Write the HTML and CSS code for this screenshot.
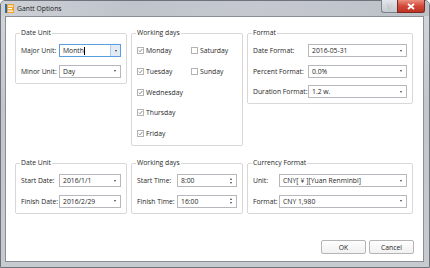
FILE: index.html
```html
<!DOCTYPE html>
<html lang="en">
<head>
    <meta charset="UTF-8">
    <title>Gantt Options</title>
    <link rel="stylesheet" href="styles.css">
</head>
<body>
    <div class="window">
        <!-- Title bar -->
        <div class="titlebar">
            <svg class="app-icon" width="9" height="9" viewBox="0 0 9 9">
                <rect x="0" y="0" width="9" height="9" fill="#f2a42b"/>
                <rect x="0" y="0" width="2" height="9" fill="#2e6db4"/>
                <rect x="3" y="1.5" width="5" height="1.2" fill="#fff"/>
                <rect x="3" y="4" width="4" height="1.2" fill="#fff"/>
                <rect x="3" y="6.5" width="5" height="1.2" fill="#fff"/>
            </svg>
            <span class="title">Gantt Options</span>
            <div class="caption">
                <span class="cap-btn help">?</span>
                <span class="cap-btn close">
                    <svg width="8" height="7" viewBox="0 0 8 7">
                        <path d="M1 1 L7 6 M7 1 L1 6" stroke="#fff" stroke-width="1.8"/>
                    </svg>
                </span>
            </div>
        </div>

        <div class="client">
            <div class="groups">
                <fieldset class="group">
                    <legend>Date Unit</legend>
                    <div class="form unit">
                        <label>Major Unit:</label>
                        <div class="combo focus"><span class="value">Month<i class="caret"></i></span><span class="drop"><b class="arrow"></b></span></div>
                        <label>Minor Unit:</label>
                        <div class="combo"><span class="value">Day</span><b class="arrow"></b></div>
                    </div>
                </fieldset>

                <fieldset class="group">
                    <legend>Working days</legend>
                    <div class="days">
                        <span class="check"><span class="box on"><svg width="5" height="5" viewBox="0 0 5 5"><path d="M0.8 2.6 L2 3.8 L4.3 1"/></svg></span>Monday</span>
                        <span class="check"><span class="box"></span>Saturday</span>
                        <span class="check"><span class="box on"><svg width="5" height="5" viewBox="0 0 5 5"><path d="M0.8 2.6 L2 3.8 L4.3 1"/></svg></span>Tuesday</span>
                        <span class="check"><span class="box"></span>Sunday</span>
                        <span class="check first"><span class="box on"><svg width="5" height="5" viewBox="0 0 5 5"><path d="M0.8 2.6 L2 3.8 L4.3 1"/></svg></span>Wednesday</span>
                        <span class="check first"><span class="box on"><svg width="5" height="5" viewBox="0 0 5 5"><path d="M0.8 2.6 L2 3.8 L4.3 1"/></svg></span>Thursday</span>
                        <span class="check first"><span class="box on"><svg width="5" height="5" viewBox="0 0 5 5"><path d="M0.8 2.6 L2 3.8 L4.3 1"/></svg></span>Friday</span>
                    </div>
                </fieldset>

                <fieldset class="group wide">
                    <legend>Format</legend>
                    <div class="form format">
                        <label>Date Format:</label>
                        <div class="combo"><span class="value">2016-05-31</span><b class="arrow"></b></div>
                        <label>Percent Format:</label>
                        <div class="combo"><span class="value">0.0%</span><b class="arrow"></b></div>
                        <label>Duration Format:</label>
                        <div class="combo"><span class="value">1.2 w.</span><b class="arrow"></b></div>
                    </div>
                </fieldset>

                <fieldset class="group">
                    <legend>Date Unit</legend>
                    <div class="form unit">
                        <label>Start Date:</label>
                        <div class="combo"><span class="value">2016/1/1</span><b class="arrow"></b></div>
                        <label>Finish Date:</label>
                        <div class="combo"><span class="value">2016/2/29</span><b class="arrow"></b></div>
                    </div>
                </fieldset>

                <fieldset class="group">
                    <legend>Working days</legend>
                    <div class="form time">
                        <label>Start Time:</label>
                        <div class="combo"><span class="value">8:00</span><span class="spin"><b class="up"></b><b class="down"></b></span></div>
                        <label>Finish Time:</label>
                        <div class="combo"><span class="value">16:00</span><span class="spin"><b class="up"></b><b class="down"></b></span></div>
                    </div>
                </fieldset>

                <fieldset class="group wide">
                    <legend>Currency Format</legend>
                    <div class="form currency">
                        <label>Unit:</label>
                        <div class="combo"><span class="value">CNY[<span class="yen">¥</span>][Yuan Renminbi]</span><b class="arrow"></b></div>
                        <label>Format:</label>
                        <div class="combo"><span class="value">CNY 1,980</span><b class="arrow"></b></div>
                    </div>
                </fieldset>
            </div>

            <div class="footer">
                <button class="btn">OK</button>
                <button class="btn">Cancel</button>
            </div>
        </div>
    </div>
</body>
</html>
```

FILE: styles.css
```css
/* Page */
body {
    margin: 0;
    font-family: "Open Sans", "DejaVu Sans", sans-serif;
    font-size: 6.8px;
    color: #1f1f1f;
}

/* Window frame */
.window {
    box-sizing: border-box;
    width: 430px;
    height: 268px;
    padding: 0 5px 5px 4px;
    display: flex;
    flex-direction: column;
    background: linear-gradient(to bottom, #d3d7dc, #c1c6cc 40%, #c7cbd0);
    border: 1px solid #6e737b;
    border-radius: 5px 5px 0 0;
}

.titlebar {
    height: 15px;
    margin: 0 -5px 0 -4px;
    padding: 0 4px 0 4px;
    display: flex;
    align-items: flex-start;
    background: linear-gradient(to right, #cdd1d6, #bfc4cb 30%, #c5c9cf 60%, #bcc1c8);
    border-radius: 4px 4px 0 0;
}

.app-icon {
    margin-top: 3px;
}

.title {
    margin-left: 3px;
    line-height: 15px;
    color: #1a1a1a;
}

.caption {
    margin-left: auto;
    display: flex;
    margin-top: -1px;
}

.cap-btn {
    box-sizing: border-box;
    height: 13px;
    display: flex;
    align-items: center;
    justify-content: center;
    border: 1px solid #7d8189;
    border-top: none;
}

.help {
    width: 16px;
    border-right: none;
    border-radius: 0 0 0 3px;
    background: linear-gradient(to bottom, #e3e6ea, #c5cad0);
    color: #f4f4f4;
    font-size: 8px;
    font-weight: bold;
    text-shadow: 0 0 1px #555;
}

.close {
    width: 28px;
    border-radius: 0 0 3px 0;
    background: linear-gradient(to bottom, #eb8f80, #d4483a 50%, #bd3322);
    border-color: #7a2a20;
}

/* Client area */
.client {
    flex: 1;
    display: flex;
    flex-direction: column;
    padding: 11px 9px 7px 9px;
    background: #fff;
    border: 1px solid #8a8f96;
}

.groups {
    display: grid;
    grid-template-columns: 112px 112px 166px;
    column-gap: 4px;
    row-gap: 12px;
    align-items: start;
}

.group {
    margin: 0;
    padding: 6px 5px 5px 5px;
    min-width: 0;
    border: 1px solid #d8d8d8;
    border-radius: 2px;
}

.group legend {
    height: 10px;
    line-height: 10px;
    padding: 0 1px;
    margin-left: -1px;
}

.form {
    display: grid;
    row-gap: 7.5px;
    align-items: center;
}

.unit { grid-template-columns: 38px 1fr; }
.format { grid-template-columns: 55px 1fr; }
.time { grid-template-columns: 40px 1fr; }
.currency { grid-template-columns: 26px 1fr; }

.form label {
    white-space: nowrap;
}

/* Combo boxes */
.combo {
    box-sizing: border-box;
    height: 13px;
    display: flex;
    align-items: center;
    padding-left: 3px;
    border: 1px solid #b6b8bd;
    background: #fff;
    white-space: nowrap;
}

.combo .value {
    display: flex;
    align-items: center;
}

.yen {
    padding: 0 2px;
}

.arrow {
    width: 0;
    height: 0;
    margin: 0 4px 0 auto;
    border-left: 1.5px solid transparent;
    border-right: 1.5px solid transparent;
    border-top: 2px solid #444;
}

.combo.focus {
    border-color: #5a9ee0;
}

.drop {
    margin-left: auto;
    width: 9px;
    height: 100%;
    display: flex;
    align-items: center;
    justify-content: center;
    background: #e2eaf4;
    border-left: 1px solid #b5cbe6;
}

.drop .arrow {
    margin: 0;
}

.caret {
    width: 1px;
    height: 8px;
    background: #000;
}

.spin {
    margin: 0 4px 0 auto;
    display: flex;
    flex-direction: column;
    gap: 2px;
}

.spin b {
    width: 0;
    height: 0;
    border-left: 1.5px solid transparent;
    border-right: 1.5px solid transparent;
}

.spin .up { border-bottom: 2px solid #444; }
.spin .down { border-top: 2px solid #444; }

/* Check boxes */
.days {
    display: grid;
    grid-template-columns: 54px 1fr;
    grid-auto-rows: 13px;
    row-gap: 7.75px;
    align-items: center;
}

.check {
    display: flex;
    align-items: center;
    gap: 2px;
    white-space: nowrap;
}

.check.first {
    grid-column: 1;
}

.box {
    box-sizing: border-box;
    width: 7px;
    height: 7px;
    display: flex;
    align-items: center;
    justify-content: center;
    border: 1px solid #b3b3b3;
    background: #fff;
}

.box svg path {
    fill: none;
    stroke: #707070;
    stroke-width: 0.8;
}

/* Buttons */
.footer {
    margin-top: auto;
    display: flex;
    justify-content: flex-end;
    gap: 3px;
}

.btn {
    box-sizing: border-box;
    width: 45px;
    height: 14px;
    padding: 0;
    font-family: inherit;
    font-size: 6.8px;
    color: #1f1f1f;
    background: linear-gradient(to bottom, #fefefe, #f1f1f1);
    border: 1px solid #b5b5b5;
    border-radius: 2px;
}
```
